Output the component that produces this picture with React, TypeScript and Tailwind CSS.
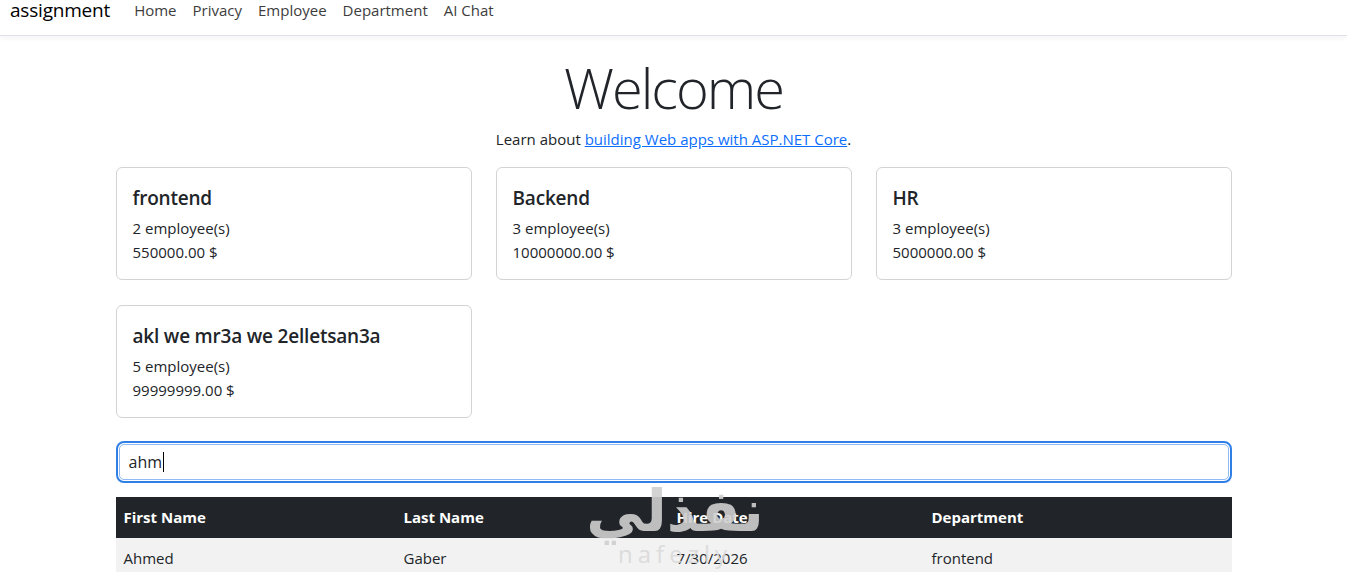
import React from "react";

type Dept = { name: string; count: number; budget: string };

const departments: Dept[] = [
  { name: "frontend", count: 2, budget: "550000.00 $" },
  { name: "Backend", count: 3, budget: "10000000.00 $" },
  { name: "HR", count: 3, budget: "5000000.00 $" },
  { name: "akl we mr3a we 2elletsan3a", count: 5, budget: "99999999.00 $" },
];

const rows = [
  { first: "Ahmed", last: "Gaber", hire: "7/30/2026", dept: "frontend" },
];

function DeptCard({ d }: { d: Dept }) {
  return (
    <div className="rounded-[6px] border border-[#d3d3d3] bg-white px-4 pb-[15px] pt-[18px]">
      <h5 className="mb-[6px] text-[19px] font-semibold leading-[24px] tracking-[-0.2px]">{d.name}</h5>
      <p className="leading-[24px]">{d.count} employee(s)</p>
      <p className="leading-[24px]">{d.budget}</p>
    </div>
  );
}

export default function App() {
  return (
    <div
      className="relative min-h-[572px] overflow-hidden bg-white text-[15px] text-[#212529]"
      style={{ fontFamily: '"Open Sans", "Noto Sans", sans-serif' }}
    >
      <header className="flex h-[36px] items-start border-b border-[#dee2e6] bg-white shadow-[0_2px_6px_rgba(0,0,0,0.05)]">
        <div className="flex items-center pl-[10px]">
          <span className="mr-[24px] text-[19px] leading-[20px] tracking-[-0.2px] text-black">assignment</span>
          <nav className="flex gap-[16px] text-[15px] leading-[18px] text-[#3d3d3d]">
            <a>Home</a>
            <a>Privacy</a>
            <a>Employee</a>
            <a>Department</a>
            <a>AI Chat</a>
          </nav>
        </div>
      </header>

      <main className="mx-auto mt-[18px] w-[1116px]">
        <div className="text-center">
          <h1 className="mb-[6px] text-[56px] font-light leading-[67px] tracking-[-2px]">Welcome</h1>
          <p className="mb-4 leading-[24px]">
            Learn about{" "}
            <a className="text-[#0d6efd] underline">building Web apps with ASP.NET Core</a>.
          </p>
        </div>

        <div className="grid grid-cols-3 gap-x-[24px] gap-y-[25px]">
          {departments.map((d) => (
            <DeptCard key={d.name} d={d} />
          ))}
        </div>

        <div className="mt-[23px] rounded-[8px] border-2 border-[#2f7fe6] p-[1px]">
          <div className="flex h-[36px] items-center rounded-[5px] border border-[#8fbaf4] bg-white px-[9px]">
            <span className="text-[16px] leading-[24px]">ahm</span>
            <span className="ml-[1px] h-[20px] w-[1px] bg-black" />
          </div>
        </div>

        <table className="mt-[14px] w-full border-collapse text-left">
          <thead>
            <tr className="bg-[#212529] text-white">
              <th className="w-[280px] px-2 py-[8px] font-bold leading-[25px]">First Name</th>
              <th className="w-[273px] px-2 py-[8px] font-bold leading-[25px]">Last Name</th>
              <th className="w-[255px] px-2 py-[8px] font-bold leading-[25px]">Hire Date</th>
              <th className="px-2 py-[8px] font-bold leading-[25px]">Department</th>
            </tr>
          </thead>
          <tbody>
            {rows.map((r) => (
              <tr key={r.first} className="bg-[#f2f2f2]">
                <td className="px-2 py-[8px] leading-[24px]">{r.first}</td>
                <td className="px-2 py-[8px] leading-[24px]">{r.last}</td>
                <td className="px-2 py-[8px] leading-[24px]">{r.hire}</td>
                <td className="px-2 py-[8px] leading-[24px]">{r.dept}</td>
              </tr>
            ))}
          </tbody>
        </table>
      </main>

      {/* site watermark */}
      <div className="pointer-events-none absolute left-[592px] top-[474px] flex w-[166px] flex-col items-center text-[#cfcfcf] opacity-90">
        <span
          className="text-[58px] font-bold leading-[70px]"
          style={{ fontFamily: '"Noto Sans", "DejaVu Sans", sans-serif' }}
          dir="rtl"
        >
          نفذلي
        </span>
        <span className="-mt-[2px] text-[24px] leading-[24px] tracking-[5px] text-[#dadada]">nafezly</span>
      </div>
    </div>
  );
}
